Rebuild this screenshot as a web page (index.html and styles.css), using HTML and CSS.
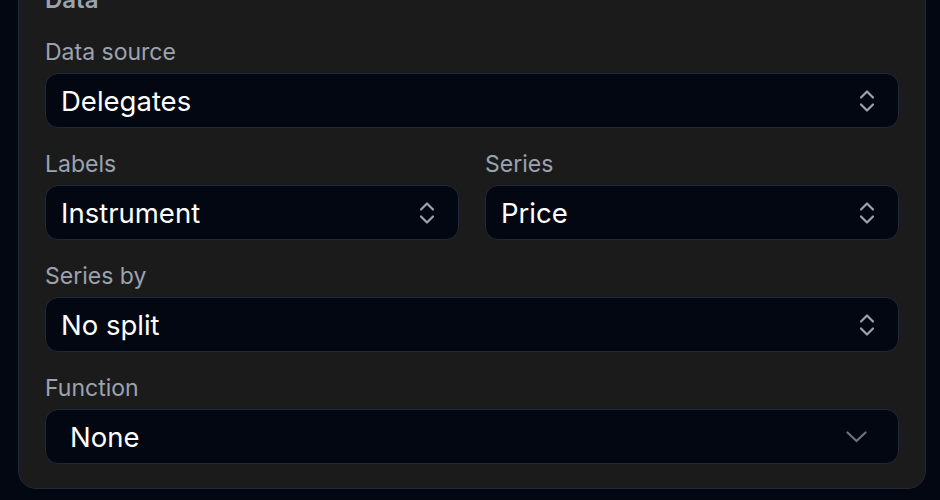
FILE: index.html
```html
<!DOCTYPE html>
<html lang="en">
<head>
<meta charset="utf-8">
<title>Data settings</title>
<link rel="stylesheet" href="styles.css">
</head>
<body>
<div class="page">
  <section class="card">
    <h2 class="card-title">Data</h2>

    <div class="field">
      <label class="field-label">Data source</label>
      <div class="select">
        <span class="select-value">Delegates</span>
        <svg class="icon-updown" width="16" height="24" viewBox="0 0 16 24" aria-hidden="true"><polyline points="2,8.5 8,2.5 14,8.5"/><polyline points="2,15.5 8,21.5 14,15.5"/></svg>
      </div>
    </div>

    <div class="field-row">
      <div class="field">
        <label class="field-label">Labels</label>
        <div class="select">
          <span class="select-value">Instrument</span>
          <svg class="icon-updown" width="16" height="24" viewBox="0 0 16 24" aria-hidden="true"><polyline points="2,8.5 8,2.5 14,8.5"/><polyline points="2,15.5 8,21.5 14,15.5"/></svg>
        </div>
      </div>
      <div class="field">
        <label class="field-label">Series</label>
        <div class="select">
          <span class="select-value">Price</span>
          <svg class="icon-updown" width="16" height="24" viewBox="0 0 16 24" aria-hidden="true"><polyline points="2,8.5 8,2.5 14,8.5"/><polyline points="2,15.5 8,21.5 14,15.5"/></svg>
        </div>
      </div>
    </div>

    <div class="field">
      <label class="field-label">Series by</label>
      <div class="select">
        <span class="select-value">No split</span>
        <svg class="icon-updown" width="16" height="24" viewBox="0 0 16 24" aria-hidden="true"><polyline points="2,8.5 8,2.5 14,8.5"/><polyline points="2,15.5 8,21.5 14,15.5"/></svg>
      </div>
    </div>

    <div class="field field-last">
      <label class="field-label">Function</label>
      <div class="select select-native">
        <span class="select-value">None</span>
        <svg class="icon-down" width="21" height="12" viewBox="0 0 21 12" aria-hidden="true"><polyline points="1.5,1.5 10.5,10 19.5,1.5"/></svg>
      </div>
    </div>
  </section>
</div>
</body>
</html>
```

FILE: styles.css
```css
* {
  box-sizing: border-box;
}

html, body {
  margin: 0;
  padding: 0;
  background: #030712;
  font-family: Inter, "Noto Sans", "Liberation Sans", sans-serif;
  overflow: hidden;
}

.page {
  padding: 0 14px 0 18px;
}

.card {
  margin-top: -41px;
  background: #1b1b1c;
  border: 1px solid #1f2937;
  border-radius: 18px;
  padding: 24px 26px 24px 26px;
}

.card-title {
  margin: 0 0 22px 0;
  font-size: 24px;
  line-height: 32px;
  font-weight: 600;
  color: #9ca3af;
}

.field {
  margin-bottom: 22px;
}

.field-last {
  margin-bottom: 0;
}

.field-row {
  display: grid;
  grid-template-columns: 1fr 1fr;
  column-gap: 26px;
}

.field-label {
  display: block;
  font-size: 23px;
  line-height: 28px;
  margin-bottom: 7px;
  color: #9ca3af;
}

.select {
  display: flex;
  align-items: center;
  justify-content: space-between;
  height: 55px;
  padding: 0 23px 0 15px;
  background: #030712;
  border: 1px solid #1f2937;
  border-radius: 13px;
}

.select-native {
  padding: 0 31px 0 24px;
}

.select-value {
  font-size: 27.5px;
  line-height: 32px;
  color: #ffffff;
}

.icon-updown polyline,
.icon-down polyline {
  fill: none;
  stroke-width: 2.2;
  stroke-linecap: round;
  stroke-linejoin: round;
}

.icon-updown polyline {
  stroke: #9ca3af;
}

.icon-down polyline {
  stroke: #6b7280;
}
```
